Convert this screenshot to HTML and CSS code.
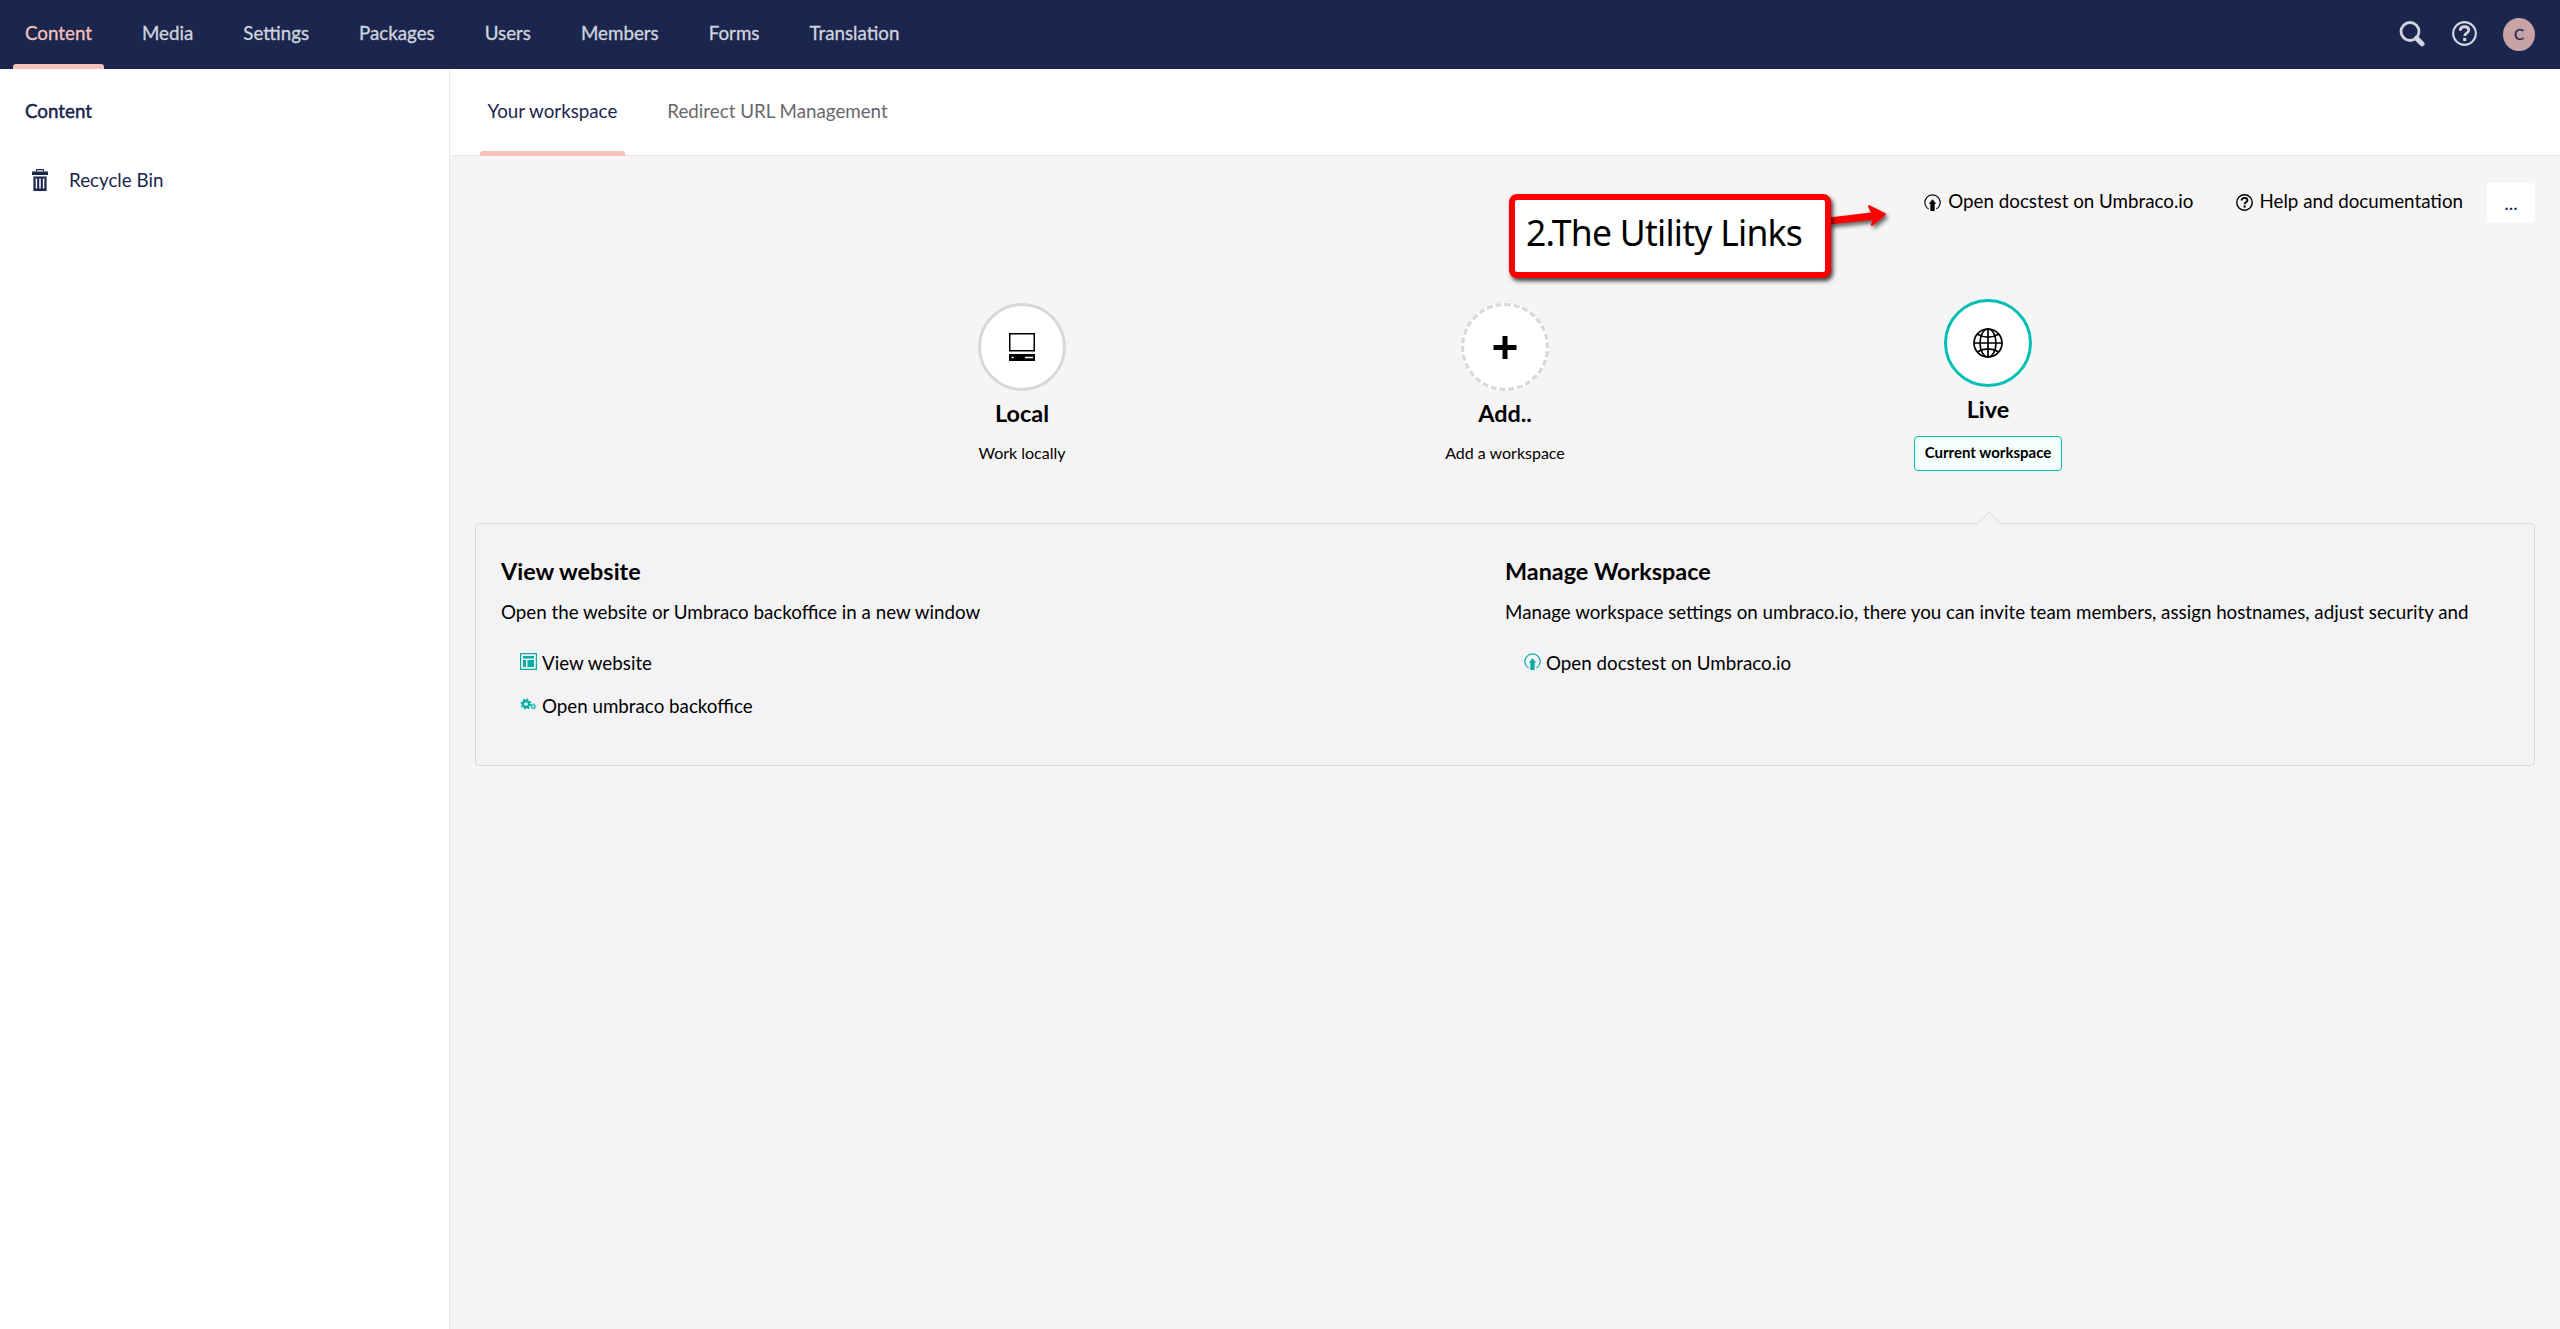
FILE: index.html
```html
<!DOCTYPE html>
<html lang="en">
<head>
<meta charset="utf-8">
<title>Content - Umbraco</title>
<link rel="stylesheet" href="styles.css">
</head>
<body>
<svg class="defs" width="0" height="0">
  <symbol id="cloud" viewBox="0 0 16 16">
    <path d="M4.3 14.2A7.2 7.2 0 1 1 11.7 14.2" fill="none" stroke="currentColor" stroke-width="1.1"/>
    <path d="M8 5 11.5 9.1H10V16H6V9.1H4.5z" fill="currentColor"/>
  </symbol>
  <symbol id="help" viewBox="0 0 24 24">
    <circle cx="12" cy="12" r="10.9" fill="none" stroke="currentColor" stroke-width="2"/>
    <path d="M7.9 9.3C7.9 6.6 9.7 5.5 12.1 5.5c2.400 0 4 1.300 4 3.300 0 2.900-3.900 2.900-3.900 5.600" fill="none" stroke="currentColor" stroke-width="2.700"/>
    <path d="M10.700 16.200h3v3h-3z" fill="currentColor"/>
  </symbol>
</svg>
<header class="topbar">
  <nav class="sections">
    <a class="section active">Content</a>
    <a class="section">Media</a>
    <a class="section">Settings</a>
    <a class="section">Packages</a>
    <a class="section">Users</a>
    <a class="section">Members</a>
    <a class="section">Forms</a>
    <a class="section">Translation</a>
  </nav>
  <div class="actions">
    <svg class="search" viewBox="0 0 26 26"><circle cx="11" cy="10.500" r="9" fill="none" stroke="currentColor" stroke-width="2.800"/><path d="M17.500 17.200 23 22.700" stroke="currentColor" stroke-width="5" stroke-linecap="round"/></svg>
    <svg class="help"><use href="#help"/></svg>
    <span class="avatar">C</span>
  </div>
</header>
<div class="body">
  <aside class="tree">
    <h2 class="tree-title">Content</h2>
    <a class="tree-item">
      <svg class="bin" viewBox="0 0 16 22"><path d="M4.500 2.500V1.400Q4.500.7 5.200.7H10.800Q11.500.7 11.500 1.400V2.500" fill="none" stroke="currentColor" stroke-width="1.300"/><path d="M0 2.500H16V6H0zM1.400 7.500H14.600V22H1.400z" fill="currentColor"/><path d="M4.400 9.500V19.500M8 9.500V19.500M11.600 9.500V19.500" stroke="#fff" stroke-width="1.500"/></svg>
      Recycle Bin
    </a>
  </aside>
  <main class="main">
    <nav class="tabs">
      <a class="tab active">Your workspace</a>
      <a class="tab">Redirect URL Management</a>
    </nav>
    <div class="utility">
      <a class="util-link"><svg class="icon"><use href="#cloud"/></svg><span>Open docstest on Umbraco.io</span></a>
      <a class="util-link"><svg class="icon"><use href="#help"/></svg><span>Help and documentation</span></a>
      <button class="more">...</button>
    </div>
    <div class="stages">
      <div class="stage">
        <div class="disc"><svg width="26" height="28" viewBox="0 0 26 28"><rect x=".75" y=".75" width="24.500" height="17" fill="none" stroke="#000" stroke-width="1.500"/><path d="M0 21H26V28H0z"/><path d="M2.500 24.500H4.500M16 24.500H24" stroke="#fff" stroke-width="1.500"/></svg></div>
        <h3>Local</h3>
        <p>Work locally</p>
      </div>
      <div class="stage">
        <div class="disc dashed"><svg width="24" height="24" viewBox="0 0 24 24"><path d="M12 1V24M.5 12.500H23.500" stroke="#000" stroke-width="5"/></svg></div>
        <h3>Add..</h3>
        <p>Add a workspace</p>
      </div>
      <div class="stage current">
        <div class="disc"><svg width="30" height="30" viewBox="0 0 30 30" fill="none" stroke="#000" stroke-width="1.700"><circle cx="15" cy="15" r="14"/><ellipse cx="15" cy="15" rx="8" ry="14"/><path d="M15 1V29M1 15H29M4.500 6.200Q15 12.200 25.500 6.200M4.500 23.800Q15 17.800 25.500 23.800"/></svg></div>
        <h3>Live</h3>
        <span class="pill">Current workspace</span>
      </div>
    </div>
    <section class="panel">
      <svg class="notch" viewBox="0 0 26 14"><path d="M0 14 13 1 26 14z" fill="#f3f3f5"/><path d="M.5 13.500 13 1 25.500 13.500" fill="none" stroke="#d8d7d9"/></svg>
      <div class="col">
        <h3>View website</h3>
        <p>Open the website or Umbraco backoffice in a new window</p>
        <a class="link"><svg class="icon" viewBox="0 0 17 17"><path d="M.6.6H16.400V16.400H.6z" fill="none" stroke="currentColor" stroke-width="1.200"/><path d="M3 3H14V5.500H3zM3 7H6V14H3zM7.500 7H14V14H7.500z" fill="currentColor"/></svg>View website</a>
        <a class="link"><svg class="icon" viewBox="0 0 17 17" fill="none" stroke="currentColor"><circle cx="6" cy="8" r="3" stroke-width="2.300"/><circle cx="6" cy="8" r="4.700" stroke-width="1.600" stroke-dasharray="1.850 1.840"/><circle cx="13.300" cy="10.500" r="1.700" stroke-width="1.100"/><circle cx="13.300" cy="10.500" r="2.600" stroke-width=".9" stroke-dasharray="1.020 1.020"/></svg>Open umbraco backoffice</a>
      </div>
      <div class="col">
        <h3>Manage Workspace</h3>
        <p>Manage workspace settings on umbraco.io, there you can invite team members, assign hostnames, adjust security and</p>
        <a class="link"><svg class="icon"><use href="#cloud"/></svg>Open docstest on Umbraco.io</a>
      </div>
    </section>
  </main>
</div>
<div class="callout">
  <svg class="arrow" viewBox="0 0 64 32"><path d="M0 12.500 42 7.500 39 1.500Q38.500-.2 40.500.3L56 8Q57.500 9 56.300 10.200L43.500 20.800Q41.500 21.500 42 19.500L43.500 15 0 19.500z" fill="#f00"/></svg>
  <span class="callout-box">2.The Utility Links</span>
</div>
</body>
</html>
```
FILE: styles.css
```css
* { box-sizing: border-box; }
body {
  margin: 0;
  height: 1329px;
  display: flex;
  flex-direction: column;
  position: relative;
  overflow: hidden;
  font: 18.75px/25px Lato, sans-serif;
  color: #000;
  background: #f6f4f5;
}
h2, h3, p { margin: 0; }
svg { display: block; flex: none; }
.defs { position: absolute; }

.topbar {
  height: 69px;
  flex: none;
  display: flex;
  justify-content: space-between;
  background: #1b264f;
}
.sections { display: flex; }
.section {
  position: relative;
  padding: 20px 25px 0;
  color: #d1d4dc;
  -webkit-text-stroke: .3px;
}
.section.active { color: #f5c1bc; }
.section.active::after, .tab.active::after {
  content: "";
  position: absolute;
  left: 13px;
  right: 13px;
  bottom: 0;
  height: 5px;
  border-radius: 3px 3px 0 0;
  background: #f5c1bc;
}
.actions {
  display: flex;
  align-items: flex-start;
  padding: 18px 25px 0 0;
  color: #d1d4dc;
}
.search { width: 26px; height: 26px; margin: 3px 27px 0 0; }
.help { width: 25px; height: 25px; margin: 3px 26px 0 0; }
.avatar {
  width: 32px;
  height: 33px;
  border-radius: 50%;
  background: #c9a2a6;
  color: #1b264f;
  font-size: 15px;
  line-height: 32px;
  text-align: center;
  -webkit-text-stroke: .3px;
}

.body { flex: 1; display: flex; min-height: 0; }
.tree {
  width: 450px;
  flex: none;
  border-right: 1px solid #e9e9eb;
  background: #fff;
  color: #1b264f;
}
.tree-title {
  padding: 29px 25px 0;
  font-size: 18.75px;
  line-height: 25px;
  font-weight: 400;
  -webkit-text-stroke: .5px;
}
.tree-item {
  display: flex;
  align-items: center;
  gap: 21px;
  padding: 44px 0 0 32px;
}
.bin { width: 16px; height: 22px; }

.main { flex: 1; min-width: 0; }
.tabs {
  display: flex;
  height: 87px;
  padding-left: 17px;
  border-bottom: 1px solid #e9e9eb;
  background: #fff;
}
.tab { position: relative; padding: 29px 25px 0 20.5px; color: #68676b; height: 87px; }
.tab + .tab { padding-left: 25px; }
.tab.active { color: #1b264f; }
.tab.active::after { right: 17px; }

.utility {
  display: flex;
  align-items: center;
  justify-content: flex-end;
  margin: 27px 25px 0 0;
  height: 40px;
}
.util-link { display: flex; align-items: center; gap: 7px; margin-bottom: 5px; }
.util-link + .util-link { margin-left: 42px; }
.util-link .icon { margin-top: 3px; }
.icon { width: 17px; height: 17px; }
.more {
  width: 48px;
  height: 40px;
  margin-left: 24px;
  padding: 0;
  border: 0;
  border-radius: 4px;
  background: #fff;
  color: #1b264f;
  font: 18.75px/38px Lato, sans-serif;
}

.stages {
  display: grid;
  grid-template-columns: repeat(3, 483px);
  justify-content: center;
  margin-top: 80px;
  height: 220px;
}
.stage { display: flex; flex-direction: column; align-items: center; }
.current { margin-top: -4px; }
.disc {
  width: 88px;
  height: 88px;
  border: 3px solid #d8d7d9;
  border-radius: 50%;
  background: #fff;
  display: grid;
  place-items: center;
}
.dashed { border-style: dashed; }
.current .disc { border-color: #00bfb3; }
h3 { font-size: 23.4px; line-height: 30px; font-weight: 700; }
.stage h3 { margin-top: 7px; }
.stage p { margin-top: 12px; font-size: 16px; line-height: 25px; }
.pill {
  margin-top: 12px;
  height: 35px;
  padding: 0 10px;
  border: 1px solid #00bfb3;
  border-radius: 4px;
  background: #f5fffe;
  font-size: 15px;
  line-height: 31px;
  font-weight: 700;
}

.panel {
  position: relative;
  display: grid;
  grid-template-columns: 1fr 1fr;
  margin: 0 25px;
  height: 243px;
  padding: 32px 25px 0;
  border: 1px solid #d8d7d9;
  border-radius: 4px;
  background: #f3f3f5;
}
.notch { position: absolute; left: 1500px; top: -13px; width: 26px; height: 14px; }
.col p { margin: 13px 0 26px; white-space: nowrap; }
.col .link {
  display: flex;
  align-items: center;
  gap: 5px;
  padding-left: 19px;
  margin-bottom: 18px;
}
.link .icon { color: #00aea2; margin-bottom: 2px; }

.callout { position: absolute; left: 1509px; top: 194px; }
.callout-box {
  position: relative;
  display: block;
  width: 322px;
  height: 84px;
  padding-left: 11px;
  border: 6px solid #f00;
  border-radius: 8px;
  background: #fff;
  box-shadow: 2px 3px 4px rgba(0, 0, 0, .75);
  font: 35.5px/64px "Noto Sans", sans-serif;
  letter-spacing: -.75px;
  white-space: nowrap;
}
.arrow {
  position: absolute;
  left: 320px;
  top: 11px;
  width: 64px;
  height: 32px;
  filter: drop-shadow(2px 3px 2px rgba(0, 0, 0, .6));
}
```
